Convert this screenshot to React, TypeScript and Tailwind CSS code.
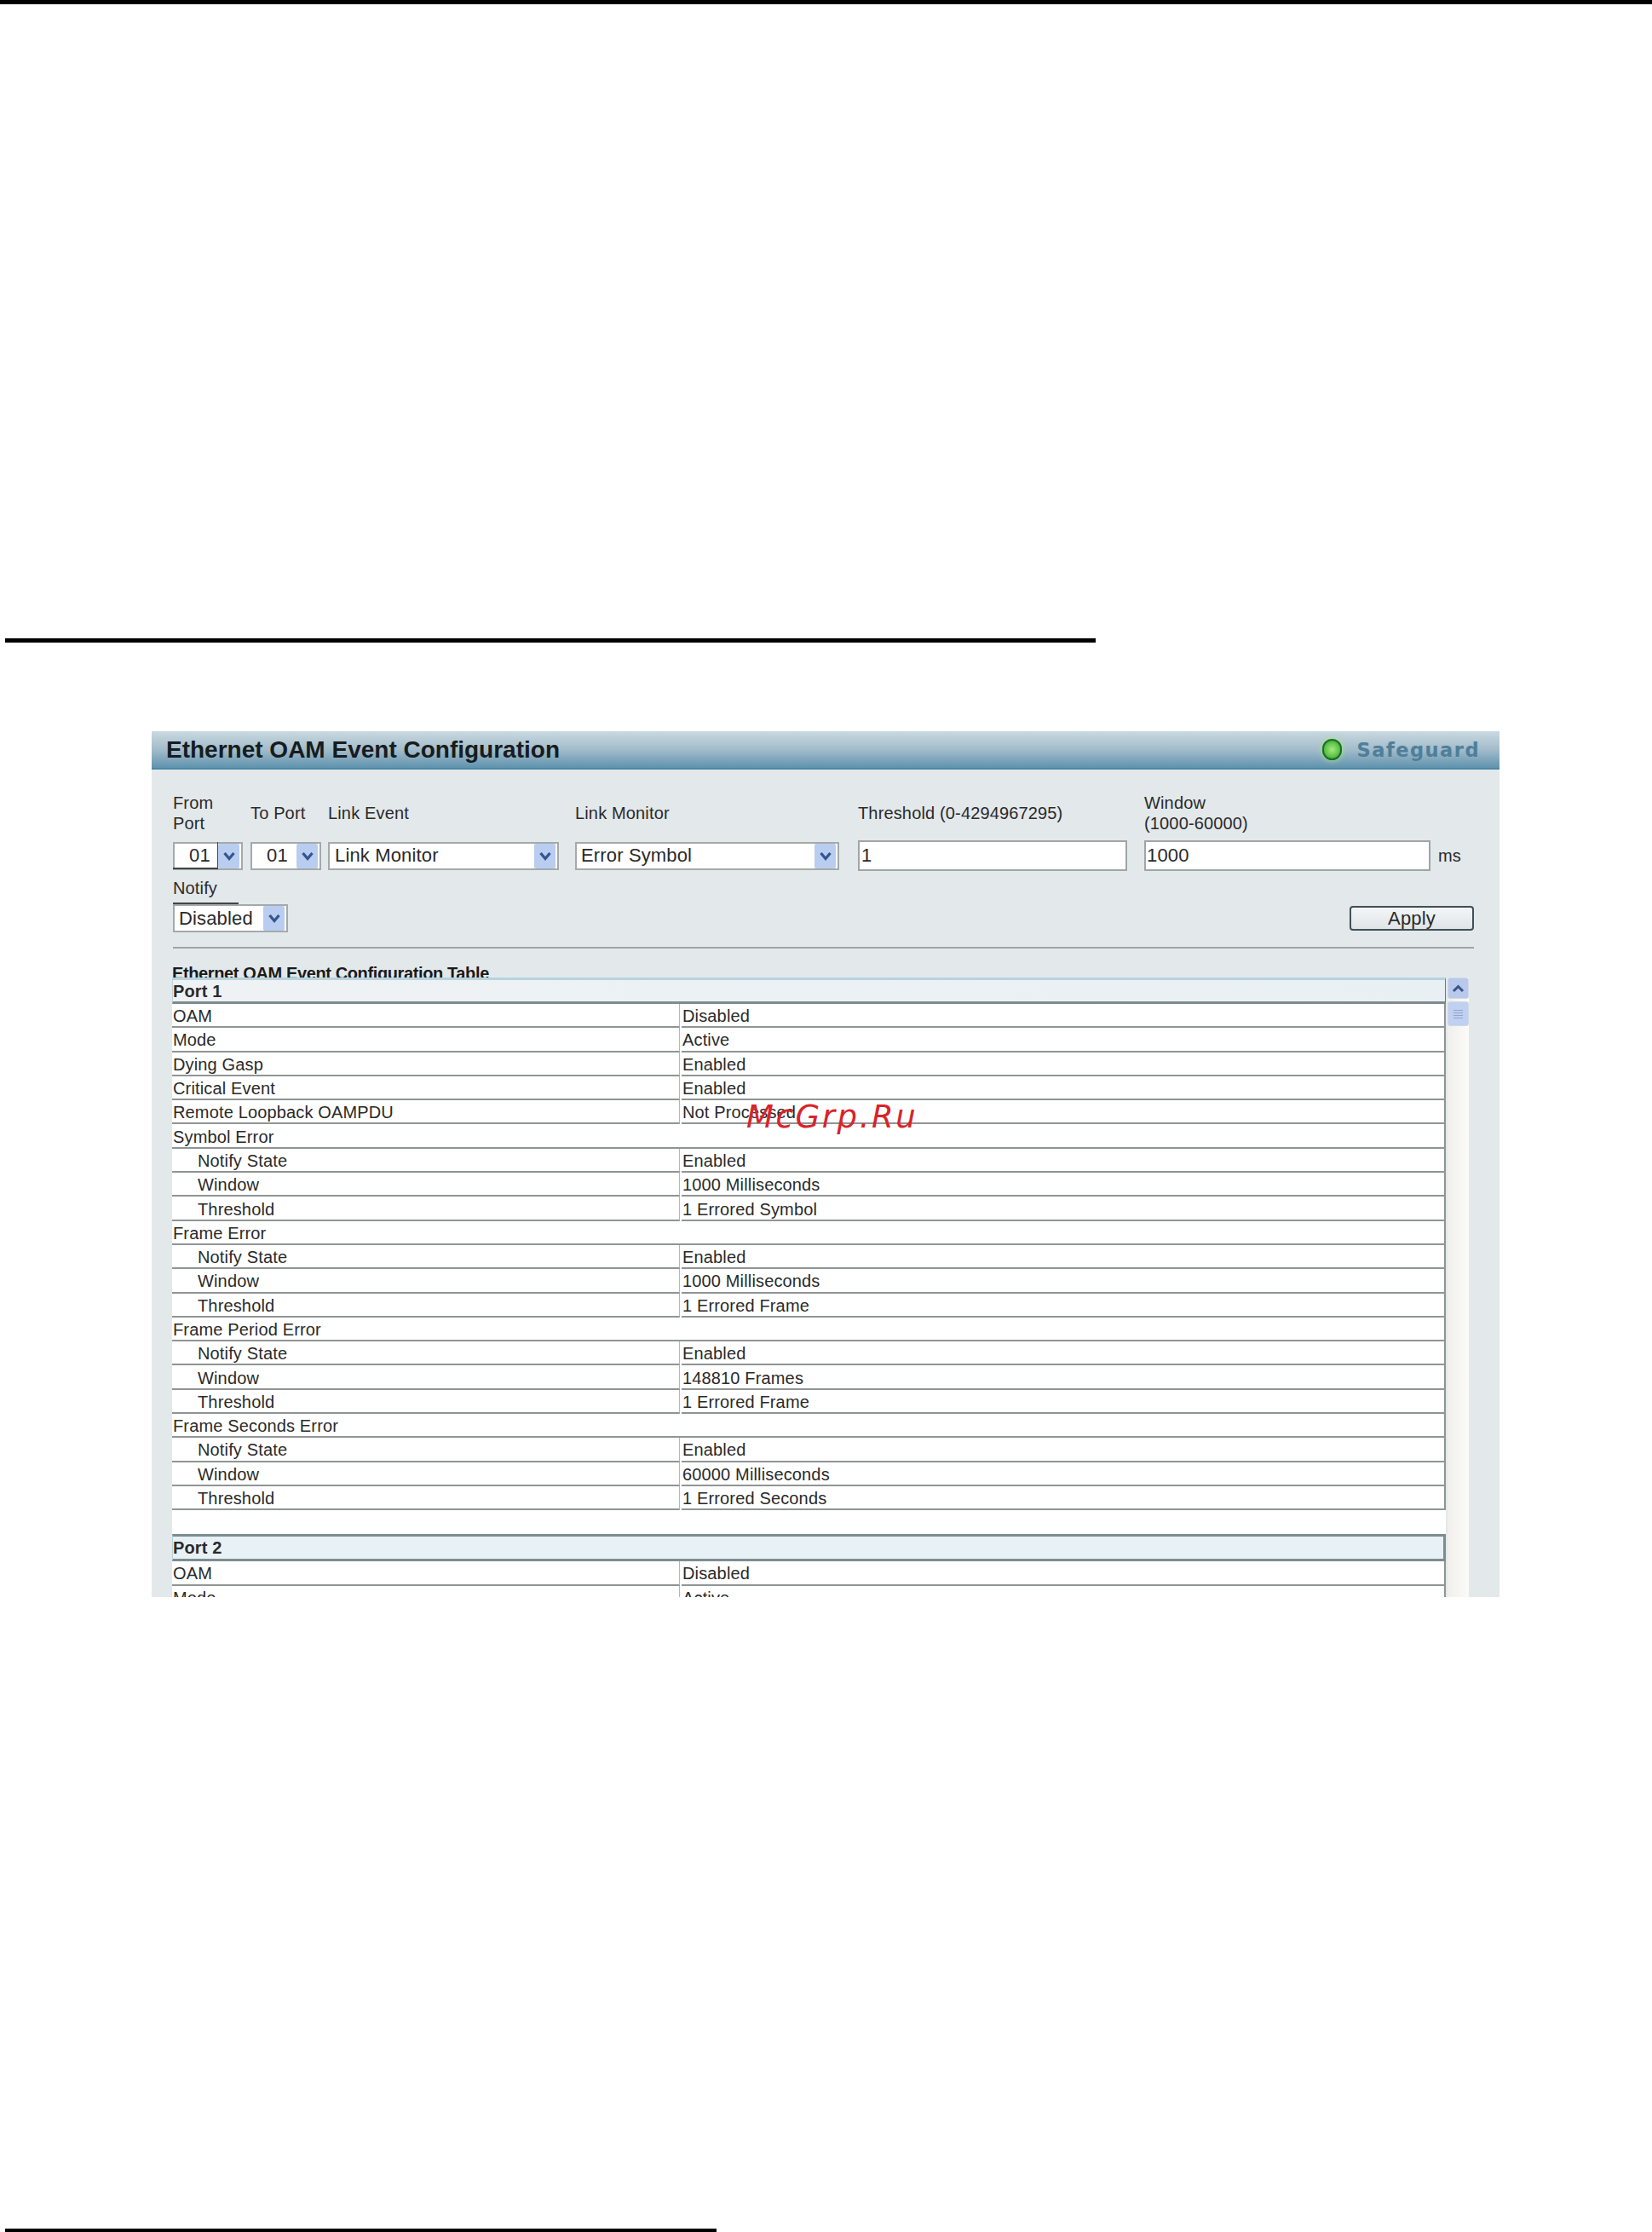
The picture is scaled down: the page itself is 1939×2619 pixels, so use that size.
import React from "react";

type Row = { label: string; value?: string; sub?: boolean };

const portRows: Row[] = [
  { label: "OAM", value: "Disabled" },
  { label: "Mode", value: "Active" },
  { label: "Dying Gasp", value: "Enabled" },
  { label: "Critical Event", value: "Enabled" },
  { label: "Remote Loopback OAMPDU", value: "Not Processed" },
  { label: "Symbol Error" },
  { label: "Notify State", value: "Enabled", sub: true },
  { label: "Window", value: "1000 Milliseconds", sub: true },
  { label: "Threshold", value: "1 Errored Symbol", sub: true },
  { label: "Frame Error" },
  { label: "Notify State", value: "Enabled", sub: true },
  { label: "Window", value: "1000 Milliseconds", sub: true },
  { label: "Threshold", value: "1 Errored Frame", sub: true },
  { label: "Frame Period Error" },
  { label: "Notify State", value: "Enabled", sub: true },
  { label: "Window", value: "148810 Frames", sub: true },
  { label: "Threshold", value: "1 Errored Frame", sub: true },
  { label: "Frame Seconds Error" },
  { label: "Notify State", value: "Enabled", sub: true },
  { label: "Window", value: "60000 Milliseconds", sub: true },
  { label: "Threshold", value: "1 Errored Seconds", sub: true },
];

function Arrow() {
  return (
    <div className="flex h-[29px] w-[25px] shrink-0 items-center justify-center rounded-[2px] bg-[#b9cdf0]">
      <svg width="16" height="13" viewBox="0 0 16 13" fill="none">
        <path d="M2.5 3 L8 9.5 L13.5 3" stroke="#34558f" strokeWidth="3.2" />
      </svg>
    </div>
  );
}

function Select({ value, className, textClass }: { value: string; className: string; textClass: string }) {
  return (
    <div className={`flex h-[33px] items-center justify-between border-2 border-[#a4a9ab] bg-white pr-[2px] text-[22px] ${className}`}>
      <span className={textClass}>{value}</span>
      <Arrow />
    </div>
  );
}

function TextBox({ value, className }: { value: string; className: string }) {
  return (
    <div className={`flex h-[36px] items-center border-2 border-[#a0a5a7] bg-white text-[22px] ${className}`}>{value}</div>
  );
}

function DataRow({ row }: { row: Row }) {
  if (!row.value) {
    return (
      <div className="flex h-[28.3px] items-center border-b-2 border-r-2 border-[#8f9594] pl-px pt-[2px]">{row.label}</div>
    );
  }
  return (
    <div className="flex h-[28.3px]">
      <div className={`flex w-[596px] items-center border-b-2 border-r border-b-[#8f9594] border-r-[#b4b7b7] pt-[2px] ${row.sub ? "pl-[30px]" : "pl-px"}`}>
        {row.label}
      </div>
      <div className="ml-[2px] flex flex-1 items-center border-b-2 border-r-2 border-[#8f9594] pl-px pt-[2px]">{row.value}</div>
    </div>
  );
}

export default function App() {
  return (
    <div className="relative h-[2619px] w-[1939px] overflow-hidden bg-white font-['Liberation_Sans',Arial,sans-serif] text-[20px] leading-[24px] tracking-[0.15px] text-[#2a2a2a]">
      <div className="h-[5px] bg-black" />
      <div className="ml-[6px] mt-[744px] h-[5px] w-[1280px] bg-black" />

      {/* device panel */}
      <div className="ml-[178px] mt-[104px] h-[1016px] w-[1582px] overflow-hidden bg-[#e3e8eb]">
        <div className="flex h-[45px] items-center justify-between border-b-2 border-[#4f87a5] bg-gradient-to-b from-[#c9d9e0] via-[#a3bccb] to-[#5f93ae] pl-[17px] pr-[23px]">
          <h1 className="text-[28px] font-bold leading-[34px] tracking-normal text-[#161c20]">Ethernet OAM Event Configuration</h1>
          <div className="flex items-center gap-[18px]">
            <span className="h-[25px] w-[23px] rounded-full border-2 border-[#1c6f22] bg-[radial-gradient(circle,#a4ea80_0%,#5cc148_60%,#1f8a22_100%)] shadow-[0_0_7px_#a6e58a]" />
            <span className="font-['DejaVu_Sans',sans-serif] text-[22.5px] font-bold leading-[30px] tracking-[1.5px] text-[#4f7f99] [text-shadow:0_0_1px_#8fb3c6]">
              Safeguard
            </span>
          </div>
        </div>

        <div className="pl-[25px] pr-[30px] pt-[27px]">
          <div className="grid grid-cols-[91px_91px_290px_332px_336px_1fr] items-center">
            <div>From<br />Port</div>
            <div>To Port</div>
            <div>Link Event</div>
            <div>Link Monitor</div>
            <div>Threshold (0-4294967295)</div>
            <div>Window<br />(1000-60000)</div>
          </div>

          <div className="mt-[8px] grid grid-cols-[91px_91px_290px_332px_336px_1fr] items-center">
            <div className="relative">
              <Select value="01" className="w-[82px]" textClass="pl-[17px]" />
              <div className="absolute left-0 top-0 h-[32px] w-[53px] border-b-2 border-r border-[#444]" />
            </div>
            <Select value="01" className="w-[83px]" textClass="pl-[17px]" />
            <Select value="Link Monitor" className="w-[271px]" textClass="pl-[6px]" />
            <Select value="Error Symbol" className="w-[310px]" textClass="pl-[5px]" />
            <TextBox value="1" className="w-[316px] pl-[2px]" />
            <div className="flex items-center">
              <TextBox value="1000" className="w-[336px] pl-px" />
              <span className="ml-[9px]">ms</span>
            </div>
          </div>

          <div className="mt-[8px]">Notify</div>
          <div className="mt-[5px] h-[2px] w-[77px] bg-[#444]" />
          <div className="flex items-center justify-between">
            <Select value="Disabled" className="w-[135px]" textClass="pl-[5px]" />
            <button className="h-[29px] w-[146px] rounded-[4px] border-2 border-[#3f5058] bg-gradient-to-b from-[#f4f6f7] to-[#dfe4e7] text-[22px] leading-[24px]">
              Apply
            </button>
          </div>

          <div className="mt-[17px] h-[2px] w-[1527px] bg-[#9fa4a6]" />
        </div>

        <div className="ml-[24px] mt-[17px] h-[17px] overflow-hidden font-bold tracking-[-0.38px] text-[#1a1a1a]">
          Ethernet OAM Event Configuration Table
        </div>

        <div className="ml-[24px] flex">
          <div className="w-[1495px] bg-white">
            <div className="flex h-[31px] items-center border-x border-b-[3px] border-t-[3px] border-[#b7d4de] border-b-[#7f8a8c] border-r-[#6e7879] bg-gradient-to-r from-[#eef2f4] to-[#e9f0f4] font-bold">
              Port 1
            </div>
            {portRows.map((row, i) => (
              <DataRow key={i} row={row} />
            ))}
            <div className="h-[28px]" />
            <div className="flex h-[32px] items-center border-b-[3px] border-l border-r-[3px] border-t-[3px] border-[#7d8c90] border-l-[#b7d4de] bg-[#e8f1f6] font-bold">
              Port 2
            </div>
            {portRows.slice(0, 2).map((row, i) => (
              <DataRow key={i} row={row} />
            ))}
          </div>

          {/* scrollbar */}
          <div className="ml-[2px] w-[25px] bg-gradient-to-r from-[#f0efec] to-[#fbfbf7]">
            <div className="flex h-[25px] items-center justify-center rounded-[3px] border border-[#cfd9e6] bg-[#b9c9ec]">
              <svg width="15" height="10" viewBox="0 0 15 10" fill="none">
                <path d="M2 8 L7.5 2.5 L13 8" stroke="#3a5687" strokeWidth="3" />
              </svg>
            </div>
            <div className="mt-[3px] flex h-[29px] flex-col items-center justify-center gap-[2px] rounded-[3px] border border-[#cfd9e6] bg-[#bfd0f0]">
              <span className="h-px w-[11px] bg-[#8ea6d0]" />
              <span className="h-px w-[11px] bg-[#8ea6d0]" />
              <span className="h-px w-[11px] bg-[#8ea6d0]" />
              <span className="h-px w-[11px] bg-[#8ea6d0]" />
            </div>
          </div>
        </div>
      </div>

      <div className="absolute bottom-0 left-[6px] h-[4px] w-[835px] bg-black" />

      {/* watermark */}
      <div className="absolute left-[876px] top-[1288px] font-['DejaVu_Sans',sans-serif] text-[37px] italic leading-[46px] tracking-[2.6px] text-[#d9232a]">
        McGrp.Ru
      </div>
    </div>
  );
}
